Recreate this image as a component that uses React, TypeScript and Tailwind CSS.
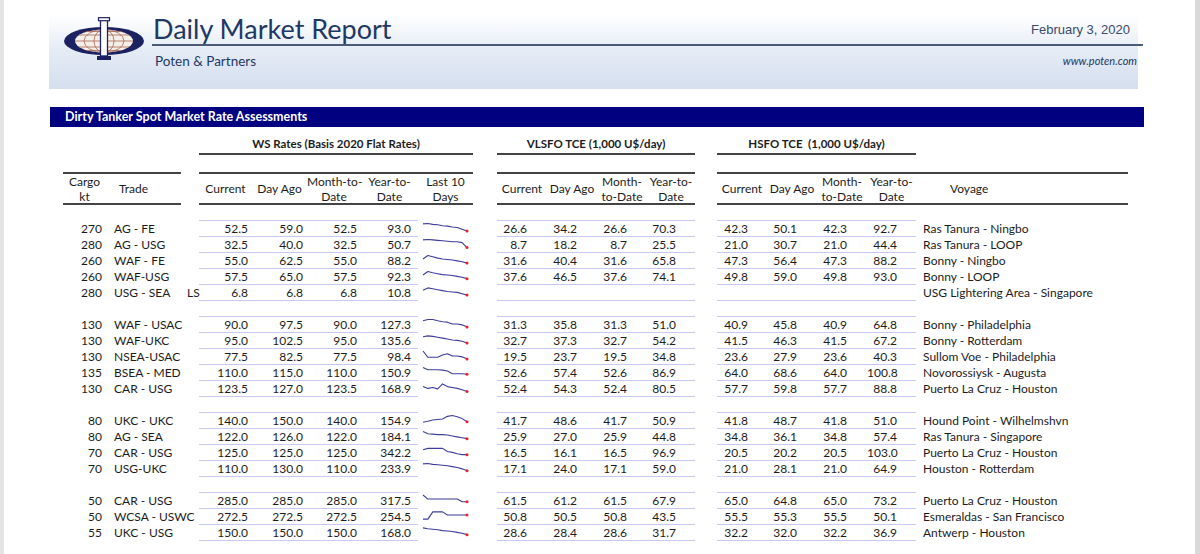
import React from "react"

type Row = {
  cargo: string
  trade: string
  ls?: string
  ws: string[]
  spark: number[]
  vl: string[]
  hs: string[]
  voyage: string
}

const groups: Row[][] = [
  [
    { cargo: "270", trade: "AG - FE", ws: ["52.5", "59.0", "52.5", "93.0"], spark: [0.1, 0.05, 0.15, 0.2, 0.3, 0.35, 0.45, 0.5, 0.7, 0.9], vl: ["26.6", "34.2", "26.6", "70.3"], hs: ["42.3", "50.1", "42.3", "92.7"], voyage: "Ras Tanura - Ningbo" },
    { cargo: "280", trade: "AG - USG", ws: ["32.5", "40.0", "32.5", "50.7"], spark: [0.1, 0.05, 0.1, 0.15, 0.2, 0.25, 0.3, 0.3, 0.4, 0.95], vl: ["8.7", "18.2", "8.7", "25.5"], hs: ["21.0", "30.7", "21.0", "44.4"], voyage: "Ras Tanura - LOOP" },
    { cargo: "260", trade: "WAF - FE", ws: ["55.0", "62.5", "55.0", "88.2"], spark: [0.45, 0.05, 0.2, 0.35, 0.45, 0.5, 0.55, 0.65, 0.75, 0.9], vl: ["31.6", "40.4", "31.6", "65.8"], hs: ["47.3", "56.4", "47.3", "88.2"], voyage: "Bonny - Ningbo" },
    { cargo: "260", trade: "WAF-USG", ws: ["57.5", "65.0", "57.5", "92.3"], spark: [0.45, 0.05, 0.2, 0.3, 0.4, 0.45, 0.5, 0.6, 0.7, 0.85], vl: ["37.6", "46.5", "37.6", "74.1"], hs: ["49.8", "59.0", "49.8", "93.0"], voyage: "Bonny - LOOP" },
    { cargo: "280", trade: "USG - SEA", ls: "LS", ws: ["6.8", "6.8", "6.8", "10.8"], spark: [0.35, 0.1, 0.2, 0.3, 0.4, 0.5, 0.55, 0.6, 0.75, 0.9], vl: ["", "", "", ""], hs: ["", "", "", ""], voyage: "USG Lightering Area - Singapore" },
  ],
  [
    { cargo: "130", trade: "WAF - USAC", ws: ["90.0", "97.5", "90.0", "127.3"], spark: [0.2, 0.05, 0.05, 0.2, 0.3, 0.35, 0.55, 0.55, 0.65, 0.9], vl: ["31.3", "35.8", "31.3", "51.0"], hs: ["40.9", "45.8", "40.9", "64.8"], voyage: "Bonny - Philadelphia" },
    { cargo: "130", trade: "WAF-UKC", ws: ["95.0", "102.5", "95.0", "135.6"], spark: [0.2, 0.1, 0.15, 0.25, 0.35, 0.45, 0.55, 0.6, 0.7, 0.9], vl: ["32.7", "37.3", "32.7", "54.2"], hs: ["41.5", "46.3", "41.5", "67.2"], voyage: "Bonny - Rotterdam" },
    { cargo: "130", trade: "NSEA-USAC", ws: ["77.5", "82.5", "77.5", "98.4"], spark: [0.0, 0.7, 0.7, 0.7, 0.45, 0.3, 0.55, 0.55, 0.65, 0.9], vl: ["19.5", "23.7", "19.5", "34.8"], hs: ["23.6", "27.9", "23.6", "40.3"], voyage: "Sullom Voe - Philadelphia" },
    { cargo: "135", trade: "BSEA - MED", ws: ["110.0", "115.0", "110.0", "150.9"], spark: [0.05, 0.3, 0.3, 0.3, 0.35, 0.45, 0.75, 0.75, 0.75, 0.8], vl: ["52.6", "57.4", "52.6", "86.9"], hs: ["64.0", "68.6", "64.0", "100.8"], voyage: "Novorossiysk - Augusta" },
    { cargo: "130", trade: "CAR - USG", ws: ["123.5", "127.0", "123.5", "168.9"], spark: [0.4, 0.6, 0.5, 0.65, 0.1, 0.4, 0.5, 0.6, 0.75, 0.95], vl: ["52.4", "54.3", "52.4", "80.5"], hs: ["57.7", "59.8", "57.7", "88.8"], voyage: "Puerto La Cruz - Houston" },
  ],
  [
    { cargo: "80", trade: "UKC - UKC", ws: ["140.0", "150.0", "140.0", "154.9"], spark: [0.8, 0.7, 0.55, 0.5, 0.45, 0.15, 0.05, 0.2, 0.4, 0.75], vl: ["41.7", "48.6", "41.7", "50.9"], hs: ["41.8", "48.7", "41.8", "51.0"], voyage: "Hound Point - Wilhelmshvn" },
    { cargo: "80", trade: "AG - SEA", ws: ["122.0", "126.0", "122.0", "184.1"], spark: [0.05, 0.3, 0.35, 0.4, 0.4, 0.45, 0.55, 0.65, 0.75, 0.85], vl: ["25.9", "27.0", "25.9", "44.8"], hs: ["34.8", "36.1", "34.8", "57.4"], voyage: "Ras Tanura - Singapore" },
    { cargo: "70", trade: "CAR - USG", ws: ["125.0", "125.0", "125.0", "342.2"], spark: [0.3, 0.15, 0.15, 0.15, 0.15, 0.5, 0.6, 0.75, 0.85, 0.85], vl: ["16.5", "16.1", "16.5", "96.9"], hs: ["20.5", "20.2", "20.5", "103.0"], voyage: "Puerto La Cruz - Houston" },
    { cargo: "70", trade: "USG-UKC", ws: ["110.0", "130.0", "110.0", "233.9"], spark: [0.1, 0.05, 0.15, 0.2, 0.25, 0.3, 0.4, 0.5, 0.65, 0.85], vl: ["17.1", "24.0", "17.1", "59.0"], hs: ["21.0", "28.1", "21.0", "64.9"], voyage: "Houston - Rotterdam" },
  ],
  [
    { cargo: "50", trade: "CAR - USG", ws: ["285.0", "285.0", "285.0", "317.5"], spark: [0.0, 0.45, 0.45, 0.45, 0.45, 0.45, 0.45, 0.45, 0.75, 0.75], vl: ["61.5", "61.2", "61.5", "67.9"], hs: ["65.0", "64.8", "65.0", "73.2"], voyage: "Puerto La Cruz - Houston" },
    { cargo: "50", trade: "WCSA - USWC", ws: ["272.5", "272.5", "272.5", "254.5"], spark: [0.9, 0.9, 0.1, 0.1, 0.1, 0.45, 0.45, 0.45, 0.45, 0.45], vl: ["50.8", "50.5", "50.8", "43.5"], hs: ["55.5", "55.3", "55.5", "50.1"], voyage: "Esmeraldas - San Francisco" },
    { cargo: "55", trade: "UKC - USG", ws: ["150.0", "150.0", "150.0", "168.0"], spark: [0.1, 0.2, 0.25, 0.3, 0.4, 0.45, 0.5, 0.6, 0.7, 0.85], vl: ["28.6", "28.4", "28.6", "31.7"], hs: ["32.2", "32.0", "32.2", "36.9"], voyage: "Antwerp - Houston" },
  ],
]

const lav = "border-b border-[#c9c8f1]"
const wsW = ["w-[53px] pr-[4px]", "w-[55px] pr-[4px]", "w-[54px] pr-[4px]", "w-[57px] pr-[7px]"]
const vlW = ["w-[50px] pr-[20px]", "w-[50px] pr-[20px]", "w-[50px] pr-[20px]", "w-[48px] pr-[19px]"]
const hsW = ["w-[50px] pr-[19px]", "w-[50px] pr-[20px]", "w-[50px] pr-[20px]", "w-[49px] pr-[19px]"]

function Spark({ pts }: { pts: number[] }) {
  const xy = pts.map((p, i) => [1 + (i * 44) / (pts.length - 1), 1 + p * 9])
  const last = xy[xy.length - 1]
  return (
    <svg width="47" height="12" className="mt-[1px] ml-[4px]">
      <polyline
        points={xy.map((c) => c.join(",")).join(" ")}
        fill="none"
        stroke="#3d3d9c"
        strokeWidth="1.1"
        strokeLinejoin="round"
      />
      <circle cx={last[0]} cy={last[1]} r="1.5" fill="#e3262b" />
    </svg>
  )
}

function Logo() {
  return (
    <svg width="82" height="44" viewBox="0 0 82 44">
      <ellipse cx="41" cy="24" rx="40" ry="14" fill="#1c2162" />
      <ellipse cx="41" cy="24" rx="29" ry="11.5" fill="#f5efe9" />
      <g stroke="#a86452" strokeWidth="0.8" fill="none">
        <line x1="12" y1="24" x2="70" y2="24" />
        <line x1="16" y1="18" x2="66" y2="18" />
        <line x1="16" y1="30" x2="66" y2="30" />
        <line x1="23" y1="14.5" x2="59" y2="14.5" />
        <line x1="23" y1="33.5" x2="59" y2="33.5" />
        <ellipse cx="41" cy="24" rx="10" ry="11.5" />
        <ellipse cx="41" cy="24" rx="20" ry="11.5" />
      </g>
      <rect x="37.5" y="3" width="7" height="36" fill="#ffffff" stroke="#1c2162" strokeWidth="1.3" />
      <rect x="35.5" y="0.7" width="11" height="3" fill="#ffffff" stroke="#1c2162" strokeWidth="1.2" />
      <rect x="34" y="39" width="14" height="4" fill="#1c2162" />
    </svg>
  )
}

function DataRow({ r }: { r?: Row }) {
  return (
    <div className="flex h-[16px] leading-[15px]">
      <div className="w-[43px] pr-[4px] text-right">{r?.cargo}</div>
      <div className="w-[75px] pl-[8px] whitespace-nowrap">{r?.trade}</div>
      <div className="w-[18px] pl-[6px]">{r?.ls}</div>
      {wsW.map((w, i) => (
        <div key={i} className={`${w} ${lav} text-right`}>
          {r?.ws[i]}
        </div>
      ))}
      <div className="w-[55px]">{r && <Spark pts={r.spark} />}</div>
      <div className="w-[24px]" />
      {vlW.map((w, i) => (
        <div key={i} className={`${w} ${lav} text-right`}>
          {r?.vl[i]}
        </div>
      ))}
      <div className="w-[22px]" />
      {hsW.map((w, i) => (
        <div key={i} className={`${w} ${lav} text-right`}>
          {r?.hs[i]}
        </div>
      ))}
      <div className="w-[212px] pl-[7px] whitespace-nowrap">{r?.voyage}</div>
    </div>
  )
}

export default function App() {
  return (
    <div className="w-[1200px] h-[554px] overflow-hidden bg-white border-l-[4px] border-l-[#e4e4e4] border-r-[5px] border-r-[#d9d9d9] font-[Lato,sans-serif] text-[#1c1c1c]">
      {/* header band */}
      <div className="ml-[45px] mt-[15px] w-[1089px] h-[74px] flex bg-gradient-to-b from-[#ffffff] via-[#e4ebf5] to-[#d4dfee]">
        <div className="ml-[14px] mt-[2px]">
          <Logo />
        </div>
        <div className="ml-[7px] mr-[-5px] flex-1 flex flex-col">
          <div className="h-[31px] flex items-end justify-between border-b-2 border-[#4c5a7a]">
            <div className="text-[27px] leading-[28px] text-[#1f3864] pl-[1px] mb-[1px]">Daily Market Report</div>
            <div className="font-['Liberation_Sans',sans-serif] text-[13px] text-[#3a4a6c] pr-[13px] mb-[5px]">
              February 3, 2020
            </div>
          </div>
          <div className="flex justify-between items-center h-[30px]">
            <div className="pl-[3px] text-[13.5px] text-[#1f3864]">Poten &amp; Partners</div>
            <div className="pr-[6px] text-[11px] italic text-[#1f3864]">www.poten.com</div>
          </div>
        </div>
      </div>

      {/* title bar */}
      <div className="ml-[46px] mt-[18px] w-[1094px] h-[20px] bg-[#000080] text-white font-bold text-[12.5px] leading-[20px] pl-[15px]">
        Dirty Tanker Spot Market Rate Assessments
      </div>

      {/* table */}
      <div className="pl-[59px] text-[12px]">
        <div className="flex h-[28px] items-end font-bold text-[11.5px]">
          <div className="w-[136px]" />
          <div className="w-[274px] border-b-2 border-[#444] text-center leading-[16px] pb-[1px]">
            WS Rates (Basis 2020 Flat Rates)
          </div>
          <div className="w-[24px]" />
          <div className="w-[198px] border-b-2 border-[#444] text-center leading-[16px] pb-[1px]">
            VLSFO TCE (1,000 U$/day)
          </div>
          <div className="w-[22px]" />
          <div className="w-[199px] border-b-2 border-[#444] text-center leading-[16px] pb-[1px] whitespace-pre">
            HSFO TCE  (1,000 U$/day)
          </div>
        </div>

        <div className="flex mt-[17px] h-[33px] leading-[15px] whitespace-nowrap">
          <div className="flex w-[118px] border-y-2 border-[#444] items-center">
            <div className="w-[43px] text-center">
              Cargo
              <br />
              kt
            </div>
            <div className="w-[75px] pl-[13px]">Trade</div>
          </div>
          <div className="w-[18px]" />
          <div className="flex w-[274px] border-y-2 border-[#444] items-center text-center">
            <div className="w-[53px]">Current</div>
            <div className="w-[55px]">Day Ago</div>
            <div className="w-[54px]">
              Month-to-
              <br />
              Date
            </div>
            <div className="w-[57px]">
              Year-to-
              <br />
              Date
            </div>
            <div className="w-[55px]">
              Last 10
              <br />
              Days
            </div>
          </div>
          <div className="w-[24px]" />
          <div className="flex w-[198px] border-y-2 border-[#444] items-center text-center">
            <div className="w-[50px]">Current</div>
            <div className="w-[50px]">Day Ago</div>
            <div className="w-[50px]">
              Month-
              <br />
              to-Date
            </div>
            <div className="w-[48px]">
              Year-to-
              <br />
              Date
            </div>
          </div>
          <div className="w-[22px]" />
          <div className="flex w-[411px] border-y-2 border-[#444] items-center text-center">
            <div className="w-[50px]">Current</div>
            <div className="w-[50px]">Day Ago</div>
            <div className="w-[50px]">
              Month-
              <br />
              to-Date
            </div>
            <div className="w-[49px]">
              Year-to-
              <br />
              Date
            </div>
            <div className="w-[212px] text-left pl-[34px]">Voyage</div>
          </div>
        </div>

        {groups.map((g, gi) => (
          <React.Fragment key={gi}>
            <DataRow />
            {g.map((r, ri) => (
              <DataRow key={ri} r={r} />
            ))}
          </React.Fragment>
        ))}
      </div>
    </div>
  )
}
